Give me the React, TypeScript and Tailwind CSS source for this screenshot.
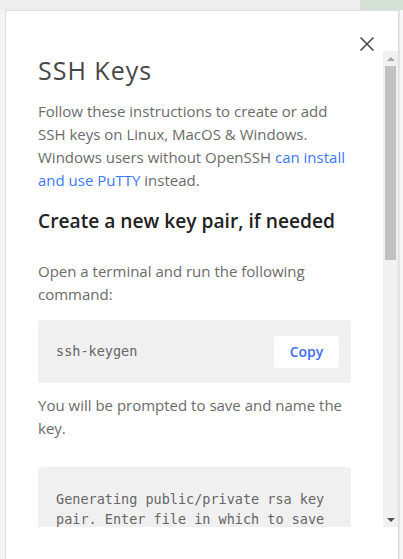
const sans = "font-['Open_Sans',sans-serif]";
const mono = "font-['DejaVu_Sans_Mono',monospace]";
const body = 'text-[15px] leading-[23px] text-[#6b6b6b]';

function CodeLine({ command }: { command: string }) {
    return (
        <div className="mt-[14px] flex h-[63px] items-center justify-between rounded-[3px] bg-[#f0f0f0] pl-[18px] pr-[12px]">
            <code className={`${mono} text-[13.5px] text-[#666]`}>{command}</code>
            <button
                type="button"
                className={`${sans} h-[32px] w-[65px] rounded-[3px] bg-white text-[14px] font-semibold text-[#3d6df5]`}
            >
                Copy
            </button>
        </div>
    );
}

// classic scrollbar, drawn since the headless page hides native ones
function Scrollbar() {
    return (
        <div className="flex w-[15px] shrink-0 flex-col bg-[#f1f1f1]">
            <div className="flex h-[15px] items-center justify-center">
                <svg width="8" height="4" viewBox="0 0 8 4">
                    <path d="M0 4 L4 0 L8 4 Z" fill="#a3a3a3" />
                </svg>
            </div>
            <div className="flex-1 px-[2px]">
                <div className="h-[194px] bg-[#c1c1c1]" />
            </div>
            <div className="flex h-[15px] items-center justify-center">
                <svg width="8" height="4" viewBox="0 0 8 4">
                    <path d="M0 0 L8 0 L4 4 Z" fill="#505050" />
                </svg>
            </div>
        </div>
    );
}

export default function App() {
    return (
        <div className={`${sans} flex h-[559px] w-[403px] flex-col overflow-hidden bg-[#f4f4f4]`}>
            {/* top bar of the page behind */}
            <div className="flex h-[10px] shrink-0">
                <div className="flex-1 bg-[#eeeeee]" />
                <div className="w-[43px] bg-[#d5e0d5]" />
            </div>

            <div className="flex min-h-0 flex-1">
                {/* modal */}
                <section className="relative ml-[5px] flex w-[394px] flex-col border-l border-r border-t border-[#dddddd] bg-white">
                    <button type="button" className="absolute right-[18px] top-[20px] text-[#444]">
                        <svg width="26" height="26" viewBox="0 0 26 26">
                            <path d="M6.5 6.5 L19.5 19.5 M19.5 6.5 L6.5 19.5" stroke="currentColor" strokeWidth="1.5" />
                        </svg>
                    </button>

                    <div className="h-[40px] shrink-0" />

                    <div className="flex h-[476px] shrink-0">
                        <div className="min-w-0 flex-1 overflow-hidden px-[32px] pt-[4px]">
                            <h1 className="text-[25px] leading-[30px] tracking-[1px] text-[#484848]">SSH Keys</h1>
                            <p className={`mt-[15px] ${body}`}>
                                Follow these instructions to create or add SSH keys on Linux, MacOS &amp; Windows.
                                Windows users without OpenSSH{' '}
                                <a href="#" className="text-[#3d78f6]">
                                    can install and use PuTTY
                                </a>{' '}
                                instead.
                            </p>

                            <h2 className="mt-[15px] text-[19.2px] font-semibold leading-[28px] text-[#222]">
                                Create a new key pair, if needed
                            </h2>
                            <p className={`mt-[25px] ${body}`}>Open a terminal and run the following command:</p>
                            <CodeLine command="ssh-keygen" />

                            <p className={`mt-[11px] ${body}`}>You will be prompted to save and name the key.</p>

                            <pre
                                className={`${mono} mt-[27px] whitespace-pre-wrap rounded-[3px] bg-[#f0f0f0] px-[18px] py-[22px] text-[13.5px] leading-[20px] text-[#666]`}
                            >
                                Generating public/private rsa key pair. Enter file in which to save the key
                                (/Users/USER/.ssh/id_rsa):
                            </pre>

                            <p className={`mt-[24px] ${body}`}>
                                Next you will be asked to create and confirm a passphrase for the key.
                            </p>
                        </div>
                        <Scrollbar />
                    </div>

                    <div className="flex-1" />
                </section>

                {/* sliver of the page behind, on the right */}
                <div className="flex-1 border-l border-[#e6e6e6] bg-[#f7f7f7]" />
            </div>
        </div>
    );
}
